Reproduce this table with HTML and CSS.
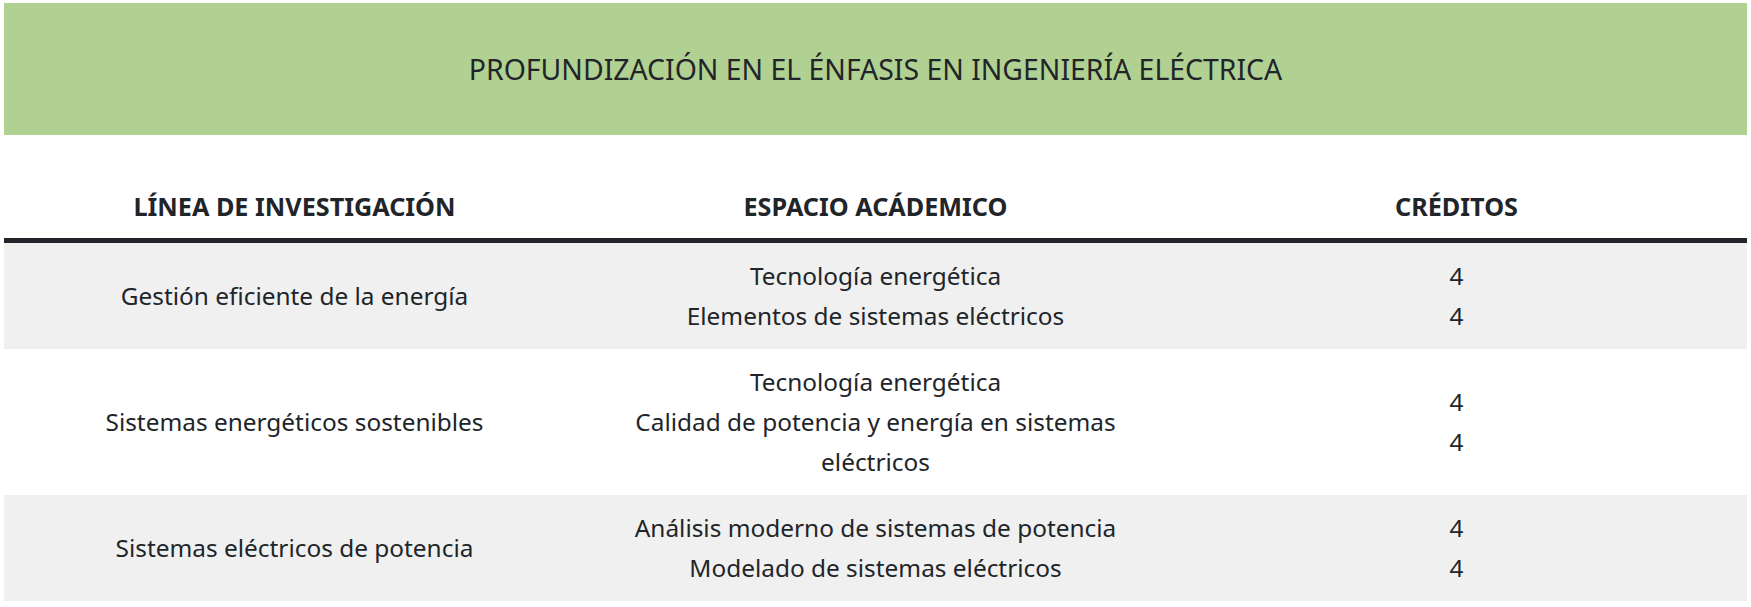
FILE: index.html
```html
<!DOCTYPE html>
<html lang="es">
<head>
<meta charset="utf-8">
<title>Profundización en el énfasis en Ingeniería Eléctrica</title>
<link rel="stylesheet" href="styles.css">
</head>
<body>
<section class="panel">
  <header class="banner">
    <h2 class="banner-title">PROFUNDIZACIÓN EN EL ÉNFASIS EN INGENIERÍA ELÉCTRICA</h2>
  </header>
  <table class="plan">
    <thead>
      <tr>
        <th>LÍNEA DE INVESTIGACIÓN</th>
        <th>ESPACIO ACÁDEMICO</th>
        <th>CRÉDITOS</th>
      </tr>
    </thead>
    <tbody>
      <tr class="alt">
        <td>Gestión eficiente de la energía</td>
        <td>Tecnología energética<br>Elementos de sistemas eléctricos</td>
        <td>4<br>4</td>
      </tr>
      <tr>
        <td>Sistemas energéticos sostenibles</td>
        <td>Tecnología energética<br>Calidad de potencia y energía en sistemas eléctricos</td>
        <td>4<br>4</td>
      </tr>
      <tr class="alt">
        <td>Sistemas eléctricos de potencia</td>
        <td>Análisis moderno de sistemas de potencia<br>Modelado de sistemas eléctricos</td>
        <td>4<br>4</td>
      </tr>
    </tbody>
  </table>
</section>
</body>
</html>
```
FILE: styles.css
```css
html, body {
  background: #ffffff;
}
body {
  margin: 3px 4px;
  font-family: "Noto Sans", "Open Sans", sans-serif;
  color: #212529;
}
.banner {
  background: #b1d192;
  height: 132px;
  display: flex;
  align-items: center;
  justify-content: center;
}
.banner-title {
  margin: 0;
  font-size: 28.4px;
  font-weight: 400;
  line-height: 1.2;
  color: #212529;
}
.plan {
  width: 100%;
  margin-top: 38px;
  border-collapse: collapse;
  table-layout: fixed;
}
.plan th {
  font-size: 25.2px;
  font-weight: 700;
  line-height: 40px;
  padding: 12.5px 12px;
  text-align: center;
  vertical-align: middle;
  border-bottom: 5px solid #212529;
}
.plan td {
  font-size: 24.4px;
  font-weight: 400;
  line-height: 40px;
  padding: 13px 12px;
  text-align: center;
  vertical-align: middle;
}
.plan tr.alt td {
  background: #f0f0f0;
}
```
